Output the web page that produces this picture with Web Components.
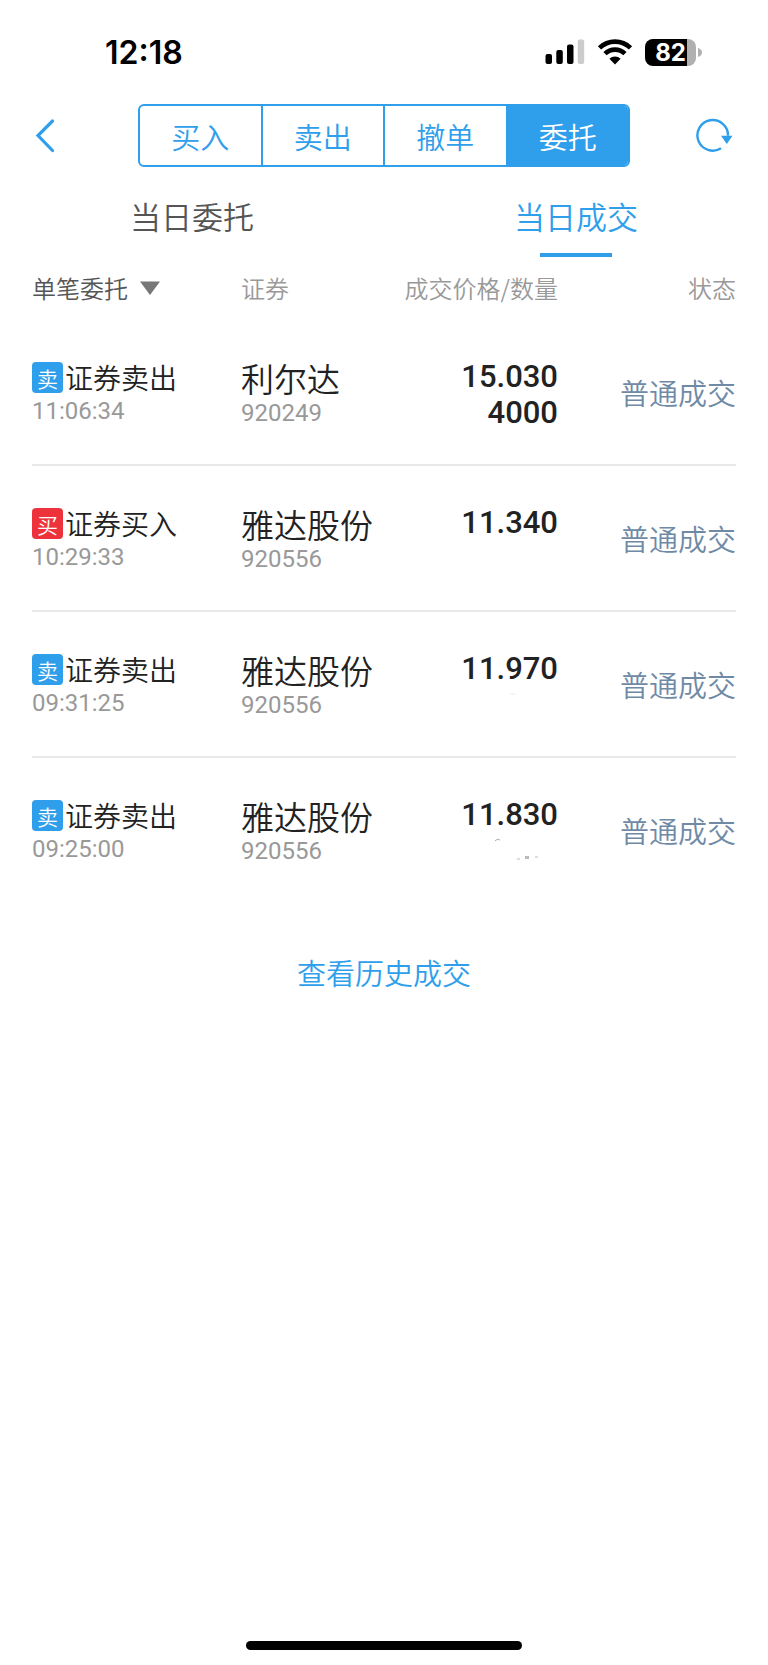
<!DOCTYPE html>
<html lang="zh-CN">
<head>
<meta charset="utf-8">
<meta name="viewport" content="width=device-width, initial-scale=1">
<title>当日成交</title>
<style>
  :root {
    --blue: #2f9eeb;
    --red: #ee323c;
    --ink: #222;
    --muted: #999;
  }
  body {
    margin: 0;
    background: #fff;
    color: var(--ink);
    font-family: "Noto Sans CJK SC", sans-serif;
    font-weight: 350;
  }
</style>
</head>
<body>
<trade-screen>
  <status-bar slot="top" time="12:18" battery="82"></status-bar>
  <nav-bar slot="top">
    <segment-item>买入</segment-item>
    <segment-item>卖出</segment-item>
    <segment-item>撤单</segment-item>
    <segment-item selected>委托</segment-item>
  </nav-bar>
  <tab-strip slot="top">
    <tab-item>当日委托</tab-item>
    <tab-item selected>当日成交</tab-item>
  </tab-strip>
  <deal-table></deal-table>
  <more-link href="#history">查看历史成交</more-link>
</trade-screen>

<script>
class BaseElement extends HTMLElement {
  constructor() {
    super();
    this.attachShadow({ mode: 'open' });
  }

  connectedCallback() {
    this.shadowRoot.innerHTML = this.render();
  }
}

// Page frame: fixed bars first, content, home indicator at the bottom
class TradeScreen extends BaseElement {
  render() {
    return `
      <style>
        :host {
          display: flex;
          flex-direction: column;
          min-height: 100vh;
        }
        main {
          flex: 1;
          padding: 0 32px;
        }
        .home {
          width: 36%;
          height: 9px;
          margin: 0 auto 15px;
          border-radius: 5px;
          background: #000;
        }
      </style>
      <header><slot name="top"></slot></header>
      <main><slot></slot></main>
      <div class="home"></div>
    `;
  }
}

class StatusBar extends BaseElement {
  render() {
    return `
      <style>
        :host {
          display: flex;
          justify-content: space-between;
          align-items: center;
          height: 104px;
          padding: 0 66px 0 105px;
          box-sizing: border-box;
          color: #000;
          font-family: Inter, sans-serif;
        }
        .time { font-size: 32px; font-weight: 600; }
        .icons { display: flex; align-items: center; gap: 12px; }
        .battery { display: flex; align-items: center; gap: 2px; }
        .level {
          display: flex;
          justify-content: center;
          align-items: center;
          width: 51px;
          height: 27px;
          border-radius: 8px;
          background: linear-gradient(90deg, #000 ${this.getAttribute('battery')}%, #b0b0b0 0);
          color: #fff;
          font-size: 24px;
          font-weight: 700;
          line-height: 27px;
        }
        svg { display: block; }
      </style>
      <span class="time">${this.getAttribute('time')}</span>
      <div class="icons">
        <svg width="40" height="26" viewBox="0 0 40 26" aria-hidden="true">
          <rect x="0.500" y="15" width="6.500" height="10" rx="2"/>
          <rect x="11.300" y="11" width="6.500" height="14" rx="2"/>
          <rect x="22" y="5.500" width="6.500" height="19.500" rx="2"/>
          <rect x="32.700" y="0.500" width="6.500" height="24.500" rx="2" fill="#ccc"/>
        </svg>
        <svg width="36" height="26" viewBox="0 0 36 26" aria-hidden="true">
          <g fill="none" stroke="#000" stroke-width="4.600">
            <path d="M2.500 8.900 A22.300 22.300 0 0 1 33.500 8.900"/>
            <path d="M8 14.700 A14.300 14.300 0 0 1 28 14.700"/>
          </g>
          <path d="M18 25.500 L12.400 19.800 A8 8 0 0 1 23.600 19.800 Z"/>
        </svg>
        <div class="battery">
          <span class="level">${this.getAttribute('battery')}</span>
          <svg width="4" height="9" viewBox="0 0 4 9" aria-hidden="true">
            <path d="M0 0 Q4 1.500 4 4.500 T0 9 Z" fill="#b0b0b0"/>
          </svg>
        </div>
      </div>
    `;
  }
}

class NavBar extends BaseElement {
  render() {
    return `
      <style>
        :host {
          display: flex;
          align-items: stretch;
          height: 63px;
          padding: 0 34px;
        }
        button {
          display: flex;
          align-items: center;
          width: 104px;
          padding: 0;
          border: 0;
          background: none;
        }
        .refresh { justify-content: flex-end; }
        .segments {
          flex: 1;
          display: flex;
          border: 2px solid var(--blue);
          border-radius: 6px;
          overflow: hidden;
        }
        svg {
          fill: none;
          stroke: var(--blue);
        }
      </style>
      <button aria-label="返回">
        <svg width="22" height="36" viewBox="0 0 22 36">
          <path d="M18.500 3 L4 17.500 L18.500 32.500" stroke-width="3.200" stroke-linecap="round" stroke-linejoin="miter"/>
        </svg>
      </button>
      <div class="segments"><slot></slot></div>
      <button class="refresh" aria-label="刷新">
        <svg width="40" height="36" viewBox="0 0 40 36">
          <path d="M27 30.200 A15.300 15.300 0 1 1 34 17.800" stroke-width="2.400"/>
          <path d="M27 17.800 H38.500 L32.800 26.100 Z" fill="#2f9eeb" stroke="none"/>
        </svg>
      </button>
    `;
  }
}

class SegmentItem extends BaseElement {
  render() {
    return `
      <style>
        :host { display: flex; flex: 1; }
        :host(:not(:first-child)) { border-left: 2px solid var(--blue); }
        button {
          flex: 1;
          padding: 0;
          border: 0;
          background: none;
          color: var(--blue);
          font: inherit;
          font-size: 29px;
          line-height: 40px;
        }
        :host([selected]) button {
          background: var(--blue);
          color: #fff;
        }
      </style>
      <button aria-pressed="${this.hasAttribute('selected')}"><slot></slot></button>
    `;
  }
}

class TabStrip extends BaseElement {
  render() {
    return `
      <style>
        :host { display: flex; height: 90px; }
      </style>
      <slot></slot>
    `;
  }
}

class TabItem extends BaseElement {
  render() {
    return `
      <style>
        :host { display: flex; flex: 1; }
        button {
          display: flex;
          flex-direction: column;
          justify-content: space-between;
          align-items: center;
          flex: 1;
          padding: 27px 0 0;
          border: 0;
          background: none;
          color: #555;
          font: inherit;
          font-size: 31px;
          line-height: 44px;
        }
        :host([selected]) button { color: var(--blue); }
        :host([selected]) button::after {
          content: "";
          width: 72px;
          height: 4px;
          background: var(--blue);
        }
      </style>
      <button aria-pressed="${this.hasAttribute('selected')}"><slot></slot></button>
    `;
  }
}

// Small square mark before the trade type
class SideBadge extends BaseElement {
  render() {
    return `
      <style>
        :host {
          display: inline-block;
          width: 31px;
          height: 31px;
          border-radius: 4px;
          background: var(--blue);
          color: #fff;
          font-size: 21px;
          line-height: 32px;
          text-align: center;
        }
        :host([side="buy"]) { background: var(--red); }
      </style>
      <slot></slot>
    `;
  }
}

const SIDES = {
  sell: { mark: '卖', label: '证券卖出' },
  buy: { mark: '买', label: '证券买入' }
};

// Faint leftovers where a quantity is wiped out
const SMUDGES = {
  light: '<ellipse cx="51" cy="7" rx="3" ry="1" fill="#f2f2f2"/>',
  dark: `
    <path d="M33 8 Q35 5 38 7" stroke="#aaa" fill="none"/>
    <path d="M55 26 H58 M73 24 H76" stroke="#ddd" stroke-width="2"/>
    <rect x="63" y="23" width="4" height="3" fill="#bbb"/>
  `
};

const DEALS = [
  { side: 'sell', time: '11:06:34', name: '利尔达', code: '920249', price: '15.030', amount: '4000' },
  { side: 'buy', time: '10:29:33', name: '雅达股份', code: '920556', price: '11.340' },
  { side: 'sell', time: '09:31:25', name: '雅达股份', code: '920556', price: '11.970', smudge: 'light' },
  { side: 'sell', time: '09:25:00', name: '雅达股份', code: '920556', price: '11.830', smudge: 'dark' }
];

class DealTable extends BaseElement {
  renderRow(deal) {
    const side = SIDES[deal.side];
    const smudge = deal.smudge
      ? `<svg width="96" height="36" viewBox="0 0 96 36" aria-hidden="true">${SMUDGES[deal.smudge]}</svg>`
      : '';

    return `
      <tr>
        <td>
          <div class="type"><side-badge side="${deal.side}">${side.mark}</side-badge>${side.label}</div>
          <div class="sub">${deal.time}</div>
        </td>
        <td>
          <div class="name">${deal.name}</div>
          <div class="sub">${deal.code}</div>
        </td>
        <td class="figures">
          <div>${deal.price}</div>
          <div>${deal.amount || smudge}</div>
        </td>
        <td class="state">普通成交</td>
      </tr>
    `;
  }

  render() {
    return `
      <style>
        :host { display: block; }
        table {
          width: 100%;
          border-collapse: collapse;
          table-layout: fixed;
        }
        .col-type { width: 209px; }
        .col-price { width: 176px; }
        .col-state { width: 178px; }
        th {
          height: 61px;
          padding: 0 0 2px;
          color: var(--muted);
          font-size: 24px;
          font-weight: inherit;
          line-height: 36px;
          text-align: left;
        }
        .right { text-align: right; }
        .filter { display: flex; align-items: center; }
        select {
          appearance: none;
          padding: 0 32px 0 0;
          border: 0;
          background: none;
          color: #555;
          font: inherit;
        }
        .filter svg { margin-left: -20px; pointer-events: none; }
        td {
          height: 144px;
          padding: 0;
          vertical-align: top;
        }
        tbody tr { border-bottom: 2px solid #e8e8e8; }
        tbody tr:last-child { border-bottom-color: transparent; }
        td > div:first-child { margin-top: 39px; }
        .type {
          display: flex;
          align-items: center;
          gap: 2px;
          font-size: 28px;
          line-height: 36px;
        }
        .name { font-size: 33px; line-height: 38px; }
        .sub {
          color: var(--muted);
          font-family: Roboto, sans-serif;
          font-size: 24px;
          font-weight: 400;
          line-height: 32px;
        }
        .figures {
          font-family: Roboto, sans-serif;
          font-size: 31px;
          font-weight: 500;
          line-height: 36px;
          text-align: right;
        }
        .figures svg { display: block; margin-left: auto; }
        .state {
          color: #708aa6;
          font-size: 29px;
          text-align: right;
          vertical-align: middle;
        }
      </style>
      <table>
        <colgroup>
          <col class="col-type">
          <col>
          <col class="col-price">
          <col class="col-state">
        </colgroup>
        <thead>
          <tr>
            <th>
              <div class="filter">
                <select aria-label="委托类型"><option>单笔委托</option></select>
                <svg width="20" height="14" viewBox="0 0 20 14" aria-hidden="true">
                  <path d="M0 0.500 H20 L10 14 Z" fill="#777"/>
                </svg>
              </div>
            </th>
            <th>证券</th>
            <th class="right">成交价格/数量</th>
            <th class="right">状态</th>
          </tr>
        </thead>
        <tbody>${DEALS.map(deal => this.renderRow(deal)).join('')}</tbody>
      </table>
    `;
  }
}

class MoreLink extends BaseElement {
  render() {
    return `
      <style>
        :host {
          display: block;
          padding: 48px 0;
          font-size: 29px;
          line-height: 40px;
          text-align: center;
        }
        a { color: var(--blue); text-decoration: none; }
      </style>
      <a href="${this.getAttribute('href')}"><slot></slot></a>
    `;
  }
}

customElements.define('trade-screen', TradeScreen);
customElements.define('status-bar', StatusBar);
customElements.define('nav-bar', NavBar);
customElements.define('segment-item', SegmentItem);
customElements.define('tab-strip', TabStrip);
customElements.define('tab-item', TabItem);
customElements.define('side-badge', SideBadge);
customElements.define('deal-table', DealTable);
customElements.define('more-link', MoreLink);
</script>
</body>
</html>
